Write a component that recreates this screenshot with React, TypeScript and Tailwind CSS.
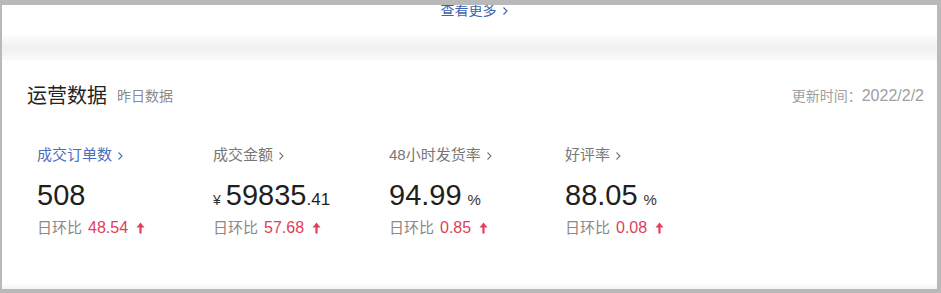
const font = { fontFamily: '"Liberation Sans", "Noto Sans CJK SC", sans-serif' }

type Metric = {
  label: string
  active?: boolean
  prefix?: string
  value: string
  decimal?: string
  suffix?: string
  ratio: string
}

const metrics: Metric[] = [
  { label: '成交订单数', active: true, value: '508', ratio: '48.54' },
  { label: '成交金额', prefix: '¥', value: '59835', decimal: '.41', ratio: '57.68' },
  { label: '48小时发货率', value: '94.99', suffix: '%', ratio: '0.85' },
  { label: '好评率', value: '88.05', suffix: '%', ratio: '0.08' },
]

function Chevron() {
  return (
    <svg width="7" height="10" viewBox="0 0 7 10" className="ml-[5px] mt-[1px]">
      <path d="M1.5 1.5 L5 5 L1.5 8.5" fill="none" stroke="currentColor" strokeWidth="1.1" />
    </svg>
  )
}

function UpArrow() {
  return (
    <svg width="9" height="12" viewBox="0 0 9 12" className="ml-[8px]">
      <path d="M4.5 0.5 L8.5 5.5 L5.6 5.5 L5.6 11.5 L3.4 11.5 L3.4 5.5 L0.5 5.5 Z" fill="#e0405a" />
    </svg>
  )
}

function MetricCell({ m }: { m: Metric }) {
  return (
    <div className="w-[176px] flex flex-col">
      <div
        className={`flex items-center h-[20px] text-[15px] ${
          m.active ? 'text-[#4a6fc0]' : 'text-[#777]'
        }`}
      >
        {m.label}
        <Chevron />
      </div>
      <div className="flex items-baseline h-[36px] mt-[16px] text-[#1f1f1f]">
        {m.prefix && <span className="text-[14px] mr-[5px] text-[#333]">{m.prefix}</span>}
        <span className="text-[29px] leading-none">{m.value}</span>
        {m.decimal && <span className="text-[17px]">{m.decimal}</span>}
        {m.suffix && <span className="text-[15px] ml-[6px] text-[#333]">{m.suffix}</span>}
      </div>
      <div className="flex items-center h-[20px] mt-[1px]">
        <span className="text-[15px] text-[#8a8a8a]">日环比</span>
        <span className="ml-[6px] text-[16px] text-[#e0405a]">{m.ratio}</span>
        <UpArrow />
      </div>
    </div>
  )
}

export default function App() {
  return (
    <div
      className="w-[941px] h-[293px] bg-[#b9b9b9] pt-[5px] pl-[2px] pr-[4px] pb-[4px] flex"
      style={font}
    >
      <div className="flex-1 flex flex-col bg-white">
        <div className="h-[30px] overflow-hidden flex items-start justify-center">
          <span className="text-[14px] leading-[16px] mt-[-3px] ml-[10px] text-[#3e62ad] flex items-center">
            查看更多
            <Chevron />
          </span>
        </div>
        <div className="h-[25px] bg-gradient-to-b from-[#fdfdfd] via-[#f0f0f0] to-[#fafafa]" />
        <div className="flex-1 flex flex-col pt-[22px]">
          <div className="flex items-center justify-between pl-[25px] pr-[13px] h-[28px]">
            <div className="flex items-center">
              <span className="text-[20px] text-[#222]">运营数据</span>
              <span className="ml-[10px] text-[14px] text-[#8a8a8a]">昨日数据</span>
            </div>
            <span className="text-[14px] text-[#a0a0a0] flex items-center">
              更新时间：<span className="text-[16px]">2022/2/2</span>
            </span>
          </div>
          <div className="flex pl-[35px] mt-[35px]">
            {metrics.map((m) => (
              <MetricCell key={m.label} m={m} />
            ))}
          </div>
        </div>
        <div className="h-[6px] bg-gradient-to-b from-white to-[#f3f3f3]" />
      </div>
    </div>
  )
}
